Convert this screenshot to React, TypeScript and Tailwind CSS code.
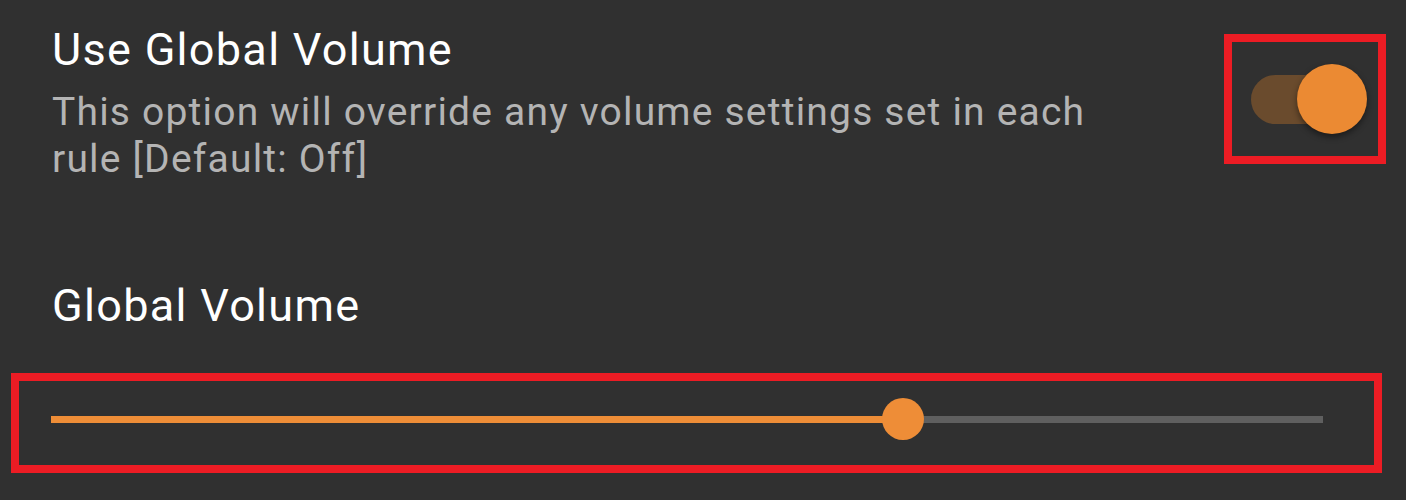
import React from "react";

function Switch({ on }: { on: boolean }) {
  return (
    <div className="relative w-[118px] h-[70px] flex items-center">
      <div className="w-[106px] h-[49px] rounded-full bg-[#6a4b2d]" />
      <div
        className={
          "absolute top-0 w-[70px] h-[70px] rounded-full bg-[#eb8a33] shadow-[0_3px_6px_rgba(0,0,0,0.45)] " +
          (on ? "left-[46px]" : "left-0")
        }
      />
    </div>
  );
}

function Slider({ value }: { value: number }) {
  return (
    <div className="relative h-[42px] flex items-center">
      <div className="flex w-full h-[7px] bg-[#5f5f5f]">
        <div className="h-full bg-[#ee8d37]" style={{ width: `${value * 100}%` }} />
      </div>
      <div
        className="absolute top-0 w-[42px] h-[42px] -ml-[21px] rounded-full bg-[#ee8d37]"
        style={{ left: `${value * 100}%` }}
      />
    </div>
  );
}

export default function App() {
  return (
    <div className="w-full h-[500px] bg-[#303030] overflow-hidden font-['Roboto',sans-serif]">
      <div className="flex items-start">
        <div className="pl-[52px] pt-[23px] w-[1140px]">
          <div className="text-[45px] leading-[53px] tracking-[1.3px] text-white">Use Global Volume</div>
          <div className="mt-[13px] text-[39px] leading-[47px] tracking-[1.2px] text-[#b4b4b4]">
            This option will override any volume settings set in each rule [Default: Off]
          </div>
        </div>
        <div className="ml-auto mt-[34px] mr-[20px] w-[162px] h-[130px] border-8 border-[#ec1c24] flex items-center pl-[19px]">
          <Switch on />
        </div>
      </div>

      <div className="mt-[96px] pl-[52px] text-[45px] leading-[53px] tracking-[1.3px] text-white">Global Volume</div>

      <div className="mt-[41px] ml-[11px] w-[1371px] h-[100px] border-8 border-[#ec1c24] pl-[32px] pr-[51px] pt-[17px]">
        <Slider value={0.67} />
      </div>
    </div>
  );
}
